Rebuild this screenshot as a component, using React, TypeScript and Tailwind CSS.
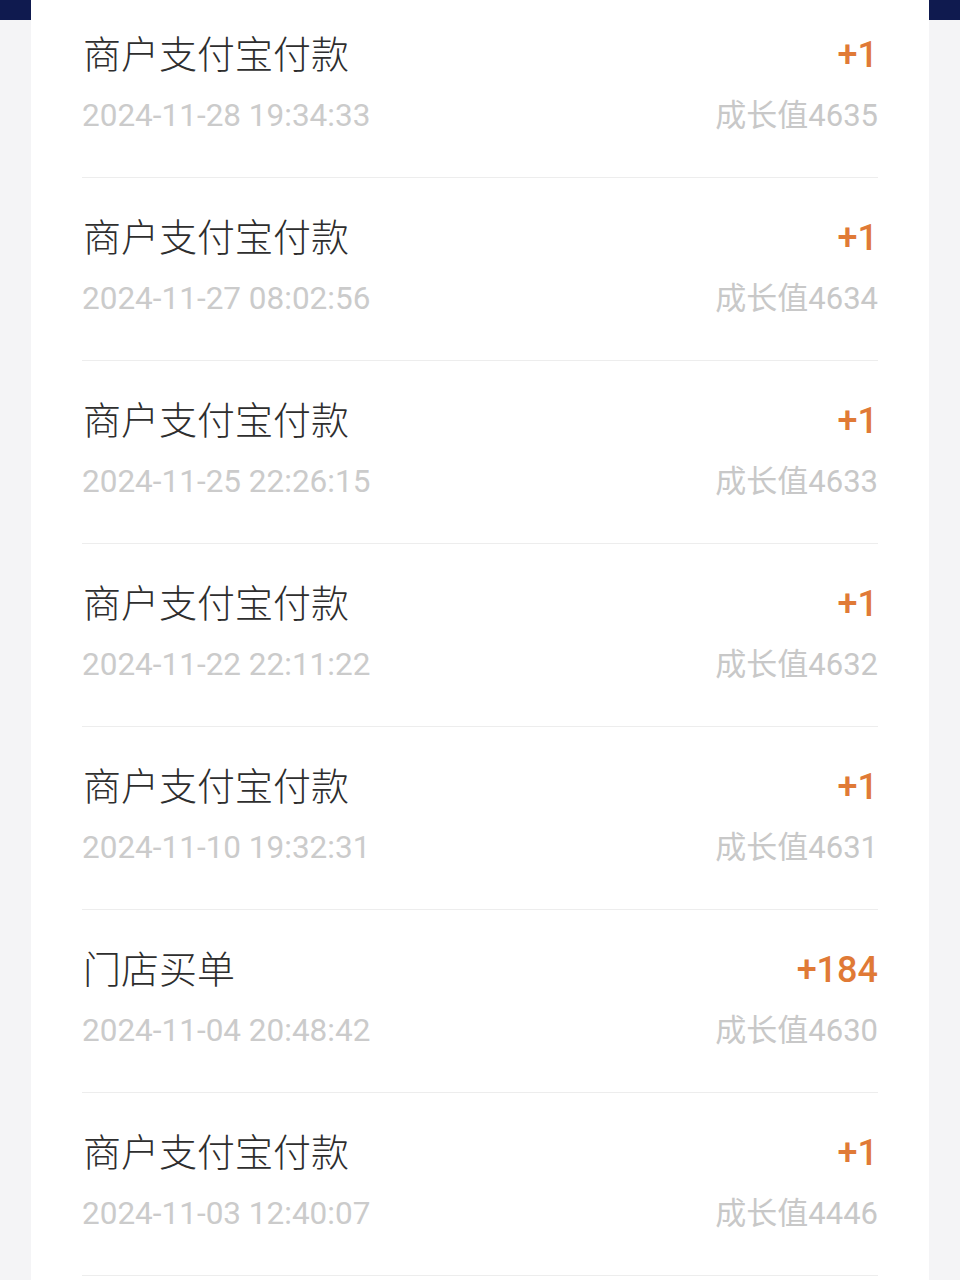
import React from 'react';

type Rec = { title: string; time: string; delta: string; total: string };

const records: Rec[] = [
  { title: '商户支付宝付款', time: '2024-11-28 19:34:33', delta: '+1', total: '4635' },
  { title: '商户支付宝付款', time: '2024-11-27 08:02:56', delta: '+1', total: '4634' },
  { title: '商户支付宝付款', time: '2024-11-25 22:26:15', delta: '+1', total: '4633' },
  { title: '商户支付宝付款', time: '2024-11-22 22:11:22', delta: '+1', total: '4632' },
  { title: '商户支付宝付款', time: '2024-11-10 19:32:31', delta: '+1', total: '4631' },
  { title: '门店买单', time: '2024-11-04 20:48:42', delta: '+184', total: '4630' },
  { title: '商户支付宝付款', time: '2024-11-03 12:40:07', delta: '+1', total: '4446' },
];

const font = { fontFamily: 'Roboto, "Noto Sans CJK SC", sans-serif' };

export default function App() {
  return (
    <div className="flex h-[1280px] overflow-hidden bg-[#f4f4f6]" style={font}>
      {/* left edge with header remnant */}
      <div className="w-[31px] shrink-0">
        <div className="h-[20px] bg-[#0f1a4f]" />
      </div>

      {/* card */}
      <div className="flex-1 bg-white px-[51px] overflow-hidden">
        <div className="-mt-[5px]">
          {records.map((r, i) => (
            <Row key={i} rec={r} />
          ))}
        </div>
      </div>

      <div className="w-[31px] shrink-0">
        <div className="h-[20px] bg-[#0f1a4f]" />
      </div>
    </div>
  );
}

function Row({ rec }: { rec: Rec }) {
  return (
    <div className="pt-[38px] pb-[41px] border-b-[1.5px] border-[#ededed]">
      <div className="flex items-center justify-between h-[44px]">
        <span className="text-[38px] leading-[44px] font-light text-[#2e2e2e] pl-[1px]">{rec.title}</span>
        <span className="text-[36px] leading-[44px] font-medium text-[#e07a36]">{rec.delta}</span>
      </div>
      <div className="mt-[19px] flex items-center justify-between h-[40px]">
        <span className="text-[31.5px] leading-[40px] text-[#cbcbcb]">{rec.time}</span>
        <span className="text-[31px] leading-[40px] text-[#c8c8c8]">成长值{rec.total}</span>
      </div>
    </div>
  );
}
